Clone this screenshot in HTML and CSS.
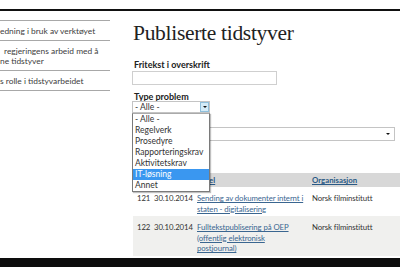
FILE: index.html
```html
<!DOCTYPE html>
<html lang="no">
<head>
<meta charset="utf-8">
<title>Publiserte tidstyver</title>
<link rel="stylesheet" href="styles.css">
</head>
<body>
<div class="page">
  <div class="topbar"></div>
  <div class="main">
    <nav class="sidebar">
      <a class="nav-item" href="#">edning i bruk av verktøyet</a>
      <a class="nav-item indent" href="#">regjeringens arbeid med å<br><span class="out">ne tidstyver</span></a>
      <a class="nav-item" href="#">s rolle i tidstyvarbeidet</a>
    </nav>
    <section class="content">
      <h1 class="title">Publiserte tidstyver</h1>
      <div class="field">
        <label class="label">Fritekst i overskrift</label>
        <div class="input"></div>
      </div>
      <div class="field">
        <label class="label label-type">Type problem</label>
        <div class="select-wrap">
          <div class="select small">
            <span class="select-value">- Alle -</span>
            <span class="select-btn"><span class="tri"></span></span>
          </div>
          <ul class="dropdown">
            <li>- Alle -</li>
            <li>Regelverk</li>
            <li>Prosedyre</li>
            <li>Rapporteringskrav</li>
            <li>Aktivitetskrav</li>
            <li class="active">IT-løsning</li>
            <li>Annet</li>
          </ul>
        </div>
      </div>
      <div class="field">
        <div class="spacer"></div>
        <div class="select wide">
          <span class="select-value"></span>
          <span class="tri plain"></span>
        </div>
      </div>
      <table class="results">
        <colgroup>
          <col class="w-nr">
          <col class="w-date">
          <col class="w-title">
          <col class="w-org">
        </colgroup>
        <thead>
          <tr>
            <th></th>
            <th></th>
            <th><a href="#">Tittel</a></th>
            <th><a href="#">Organisasjon</a></th>
          </tr>
        </thead>
        <tbody>
          <tr>
            <td>121</td>
            <td>30.10.2014</td>
            <td class="c-title"><a href="#">Sending av dokumenter internt i staten - digitalisering</a></td>
            <td>Norsk filminstitutt</td>
          </tr>
          <tr class="alt">
            <td>122</td>
            <td>30.10.2014</td>
            <td class="c-title"><a href="#">Fulltekstpublisering på OEP (offentlig elektronisk<br>postjournal)</a></td>
            <td>Norsk filminstitutt</td>
          </tr>
        </tbody>
      </table>
    </section>
  </div>
  <div class="bottombar"></div>
</div>
</body>
</html>
```

FILE: styles.css
```css
* { box-sizing: border-box; }
html, body { margin: 0; padding: 0; background: #fff; }
body { width: 400px; height: 267px; overflow: hidden; font-family: Lato, "Open Sans", sans-serif; color: #333; }

.page { display: flex; flex-direction: column; height: 267px; }
.topbar { height: 11px; border-bottom: 2px solid #111; flex: none; }
.main { flex: 1; display: flex; overflow: hidden; min-height: 0; }
.bottombar { height: 9px; background: #0d0d0d; flex: none; }

.sidebar { width: 110px; flex: none; padding-top: 9px; display: flex; flex-direction: column; }
.nav-item { display: block; border-top: 1px solid #a8a8a8; padding: 5px 0 4px 0; font-size: 8.4px; line-height: 10px; color: #404040; text-decoration: none; white-space: nowrap; }
.nav-item:last-child { border-bottom: 1px solid #a8a8a8; }
.nav-item.indent { padding-left: 4px; }
.nav-item .out { margin-left: -4px; }

.content { margin-left: 22px; flex: 1; min-width: 0; }
.title { margin: 9px 0 0 1px; font-family: "Liberation Serif", "Times New Roman", serif; font-weight: normal; font-size: 21.5px; line-height: 26px; letter-spacing: -0.3px; color: #222; }

.field { display: flex; flex-direction: column; align-items: flex-start; }
.label { display: block; margin: 14px 0 1px 2px; font-size: 9px; line-height: 10px; font-weight: bold; color: #222; }
.label-type { margin-top: 7px; line-height: 9px; margin-bottom: 0; }
.spacer { height: 14px; }

.input { width: 145px; height: 14px; border: 1px solid #cfcfcf; background: #fff; }

.select-wrap { position: relative; }
.select { display: flex; align-items: center; justify-content: space-between; border: 1px solid #c4c4c4; background: #fff; font-size: 8.5px; color: #333; }
.select.small { width: 78px; height: 12px; padding-left: 2px; }
.select.wide { width: 263px; height: 14px; padding-right: 4px; }
.select-btn { width: 9px; height: 10px; background: #d4ebf7; border: 1px solid #8fbfdc; display: flex; align-items: center; justify-content: center; }
.tri { width: 0; height: 0; border-left: 2px solid transparent; border-right: 2px solid transparent; border-top: 2px solid #111; }

.dropdown { position: absolute; top: 100%; left: 0; width: 78px; margin: 0; padding: 0; list-style: none; background: #fff; border: 1px solid #7a7a7a; border-top-color: #aaa; box-shadow: 1px 1px 1px rgba(0,0,0,0.25); z-index: 5; }
.dropdown li { height: 11px; line-height: 11px; padding-left: 2px; font-size: 8.5px; color: #333; white-space: nowrap; }
.dropdown li.active { background: #3a97f0; color: #fff; }

.results { margin: 32px 0 0 1px; width: 290px; table-layout: fixed; border-collapse: collapse; font-size: 7.8px; letter-spacing: -0.1px; color: #333; }
.w-nr { width: 17px; }
.w-date { width: 43px; }
.w-title { width: 115px; }
.w-org { width: 115px; }
.results th { background: #d8d8d8; text-align: left; padding: 3px 4px; height: 14px; line-height: 8px; font-weight: bold; letter-spacing: 0; }
.results th a { color: #2a5a86; }
.results td { vertical-align: top; padding: 6px 4px 2px 4px; line-height: 10.5px; white-space: nowrap; }
.results td.c-title { white-space: normal; padding-right: 0; }
.results tr.alt td { background: #f0f0ee; }
.results td a { color: #3a6690; }
```
